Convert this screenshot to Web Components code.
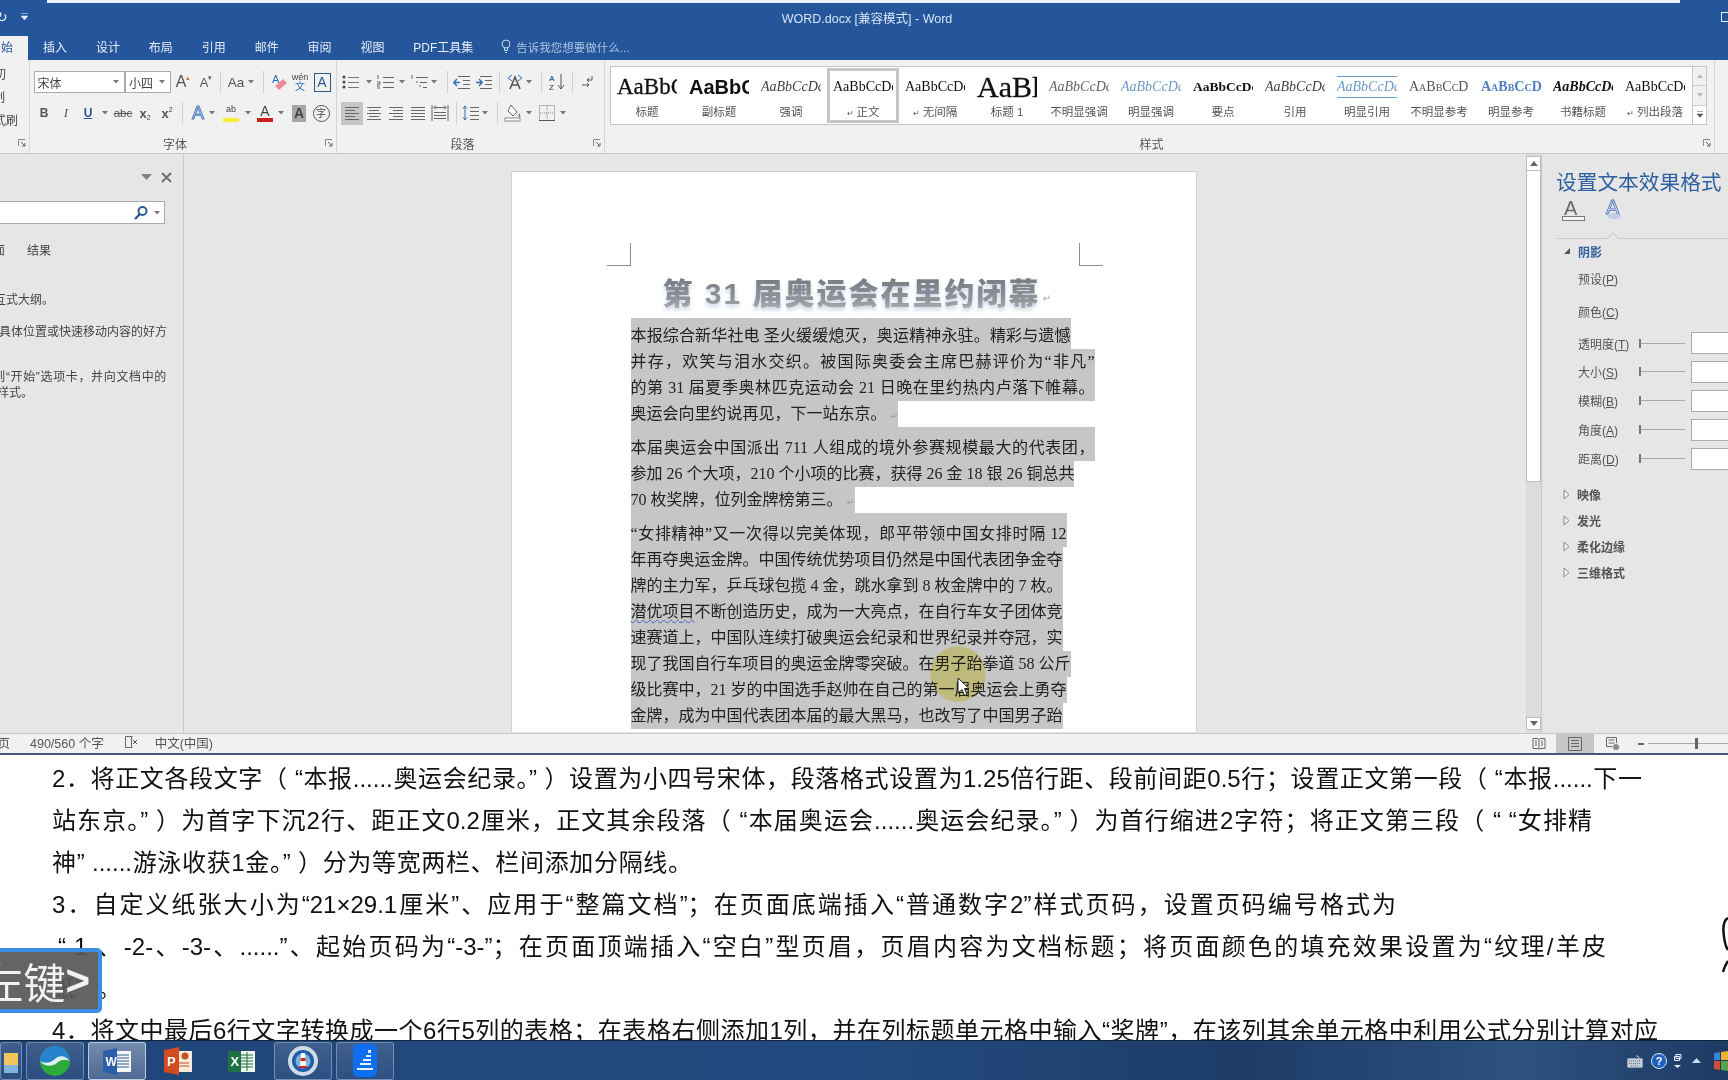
<!DOCTYPE html>
<html lang="zh-CN">
<head>
<meta charset="utf-8">
<title>WORD.docx</title>
<style>
  html, body { margin: 0; height: 1080px; overflow: hidden; background: #fff; }
  body { font-family: "Liberation Sans", "Noto Sans CJK SC", sans-serif; position: relative; display: flex; flex-direction: column; }
</style>
</head>
<body>
<word-titlebar></word-titlebar>
<word-tabs></word-tabs>
<word-ribbon></word-ribbon>
<word-workspace></word-workspace>
<word-status></word-status>
<task-text></task-text>
<task-bar></task-bar>
<key-badge>左键<b>&gt;</b></key-badge>

<script>
const caret = '<svg width="6" height="4"><path d="M0 0h6L3 3.500z" fill="#777"/></svg>';

// cells placed by their centre x, the gaps come from the previous cell
function cells(items, origin) {
    let end = origin;
    return items.map(([x, html, w = 18]) => {
        const left = x - w / 2 - end;
        end = x + w / 2;
        return `<span class="c" style="width:${w}px;margin-left:${left}px">${html}</span>`;
    }).join('');
}
const tx = (t, s) => `<span style="${s}">${t}</span>`;
const lines = (rows, c = '#666') => `<svg width="18" height="16" fill="none" stroke="${c}">${rows.map(([a, b, y]) => `<path d="M${a} ${y}.5H${b}"/>`).join('')}</svg>`;

const icons = {
    bullets: '<svg width="18" height="16"><g fill="#444"><circle cx="2" cy="3" r="1.500"/><circle cx="2" cy="8" r="1.500"/><circle cx="2" cy="13" r="1.500"/></g><path d="M6 3.500h11M6 8.500h11M6 13.500h11" stroke="#777"/></svg>',
    numbers: '<svg width="18" height="16"><path d="M1 1v4M0 8h3v2H0v2h3M0 14h3M6 3.500h11M6 8.500h11M6 13.500h11" stroke="#666" fill="none"/></svg>',
    multi: '<svg width="18" height="16"><path d="M1 1v4M5 3.500h12M5 8h2M9 8.500h7M8 12h2M12 13.500h4M12 10v0" stroke="#666" fill="none"/></svg>',
    outdent: '<svg width="18" height="16"><path d="M5 2.500h12M10 6.500h7M10 10.500h7M5 14.500h12" stroke="#666"/><path d="M7 8.500H1M4 5L.8 8.500 4 12" stroke="#2f6fb5" stroke-width="1.400" fill="none"/></svg>',
    indent: '<svg width="18" height="16"><path d="M5 2.500h12M10 6.500h7M10 10.500h7M5 14.500h12" stroke="#666"/><path d="M1 8.500h6M4 5l3.200 3.500L4 12" stroke="#2f6fb5" stroke-width="1.400" fill="none"/></svg>',
    dir: '<svg width="18" height="16"><path d="M2 4l4-3M2 4l4 3M16 4l-4-3M16 4l-4 3" stroke="#2f6fb5" fill="none"/><path d="M4 15L9 3l5 12M6 11h6" stroke="#555" stroke-width="1.600" fill="none"/></svg>',
    sort: '<svg width="18" height="18"><text x="1" y="8" font-size="8" font-weight="700" fill="#2f6fb5" font-family="Liberation Sans">A</text><text x="1" y="17" font-size="8" font-weight="700" fill="#666" font-family="Liberation Sans">Z</text><path d="M13 1v15M10 12l3 4 3-4" stroke="#555" fill="none"/></svg>',
    para: '<svg width="14" height="16"><path d="M11 2v4H6M8 4L6 6l2 2" stroke="#555" fill="none"/><path d="M1 11h7M6 9l2 2-2 2" stroke="#555" fill="none"/></svg>',
    left: lines([[2, 16, 2], [2, 12, 5], [2, 16, 8], [2, 12, 11], [2, 16, 14]]),
    center: lines([[2, 16, 2], [4, 14, 5], [2, 16, 8], [4, 14, 11], [2, 16, 14]]),
    right: lines([[2, 16, 2], [6, 16, 5], [2, 16, 8], [6, 16, 11], [2, 16, 14]]),
    justify: lines([[2, 16, 2], [2, 16, 5], [2, 16, 8], [2, 16, 11], [2, 16, 14]]),
    dist: '<svg width="18" height="18"><path d="M1 1v16M17 1v16M3 3.500h12M5 1.500L3 3.500l2 2M13 1.500l2 2-2 2M3 8.500h12M3 11.500h12M3 14.500h12" stroke="#666" fill="none"/></svg>',
    spacing: '<svg width="18" height="18"><path d="M3 2v14M1 4.500L3 2l2 2.500M1 13.500L3 16l2-2.500" stroke="#2f6fb5" fill="none"/><path d="M8 3.500h9M8 7.500h9M8 11.500h9M8 15.500h9" stroke="#666"/></svg>',
    shade: '<svg width="18" height="18"><path d="M7 1l6 7-4 4-5-5z" fill="#fff" stroke="#666"/><path d="M15 9c1 2 2 3 1 4s-2 0-1-4z" fill="#777"/><rect x="1" y="14" width="15" height="3" fill="#fff" stroke="#888"/></svg>',
    border: '<svg width="18" height="18"><rect x="1.500" y="1.500" width="15" height="15" fill="none" stroke="#777" stroke-dasharray="1 1"/><path d="M9 2v14M2 9h14" stroke="#888" stroke-dasharray="1 1"/><path d="M1 16.500h16" stroke="#555"/></svg>',
    eraser: '<svg width="18" height="18"><text x="2" y="10" font-size="11" fill="#2f6fb5" font-family="Liberation Sans">A</text><path d="M5 13l8-7 4 4-8 7z" fill="#e58f99"/></svg>',
    launcher: '<svg width="8" height="8"><path d="M.5 7V.5H7" fill="none" stroke="#888"/><path d="M3 3l4 4M7 4v3H4" fill="none" stroke="#666"/></svg>',
    search: '<svg width="16" height="16"><circle cx="9.500" cy="6" r="4" fill="none" stroke="#2a5f96" stroke-width="2"/><path d="M7 9l-5 5" stroke="#2a4f78" stroke-width="2.200"/></svg>'
};

class ShadowBox extends HTMLElement {
    constructor() {
        super();
        const shadow = this.attachShadow({ mode: 'open' });
        shadow.innerHTML = `<style>${this.css()}</style>${this.html()}`;
    }
    css() { return ''; }
    html() { return '<slot></slot>'; }
}

class WordTitlebar extends ShadowBox {
    css() {
        return `
            :host { display: block; height: 36px; background: #25569b; color: #d5e4f3; position: relative; font-size: 12.5px; flex: none; }
            .strip { height: 3px; margin: 0 48px 0 47px; background: #e9f3fb; }
            .bar { display: grid; grid-template-columns: 1fr auto 1fr; align-items: center; height: 28px; padding-left: 6px; }
            .qa { display: flex; gap: 13px; align-items: center; margin-left: -6px; }
            .undo { margin-left: -4px; font-size: 14px; color: #e6eef8; }
            .r { justify-self: end; display: flex; margin-right: -3px; }
        `;
    }
    html() {
        return `<div class="strip"></div>
            <div class="bar">
                <div class="qa"><span class="undo">↻</span><svg width="7" height="8"><path d="M0 .5h7M0 3h7L3.500 7z" fill="#e6eef8" stroke="#e6eef8" stroke-width=".5"/></svg></div>
                <div>WORD.docx [兼容模式] - Word</div>
                <div class="r"><svg width="10" height="12"><rect x=".5" y="1.500" width="12" height="9" fill="none" stroke="#e6eef8"/></svg></div>
            </div>`;
    }
}

class WordTabs extends ShadowBox {
    css() {
        return `
            :host { display: flex; height: 24px; background: #25569b; color: #e6eef8; font-size: 12px; align-items: center; overflow: hidden; flex: none; }
            .on { width: 28px; height: 24px; background: #f1f1f1; color: #25569b; display: flex; justify-content: flex-end; align-items: center; overflow: hidden; white-space: nowrap; padding: 0 15px 3px 0; box-sizing: border-box; }
            .list { display: flex; gap: 28.900px; margin: 0 0 3px 15px; }
            .ask { display: flex; align-items: center; gap: 5px; margin: 0 0 3px 28px; color: #a9c2e0; font-size: 11.5px; }
        `;
    }
    html() {
        const tabs = ['插入', '设计', '布局', '引用', '邮件', '审阅', '视图', 'PDF工具集'];
        return `<div class="on">开始</div>
            <div class="list">${tabs.map(t => `<span>${t}</span>`).join('')}</div>
            <div class="ask"><svg width="10" height="15" fill="none" stroke="#c6d8ec"><circle cx="5" cy="5" r="4"/><path d="M3.500 9v2.500h3V9M4 13.500h2"/></svg>告诉我您想要做什么...</div>`;
    }
}

class RibbonGroup extends ShadowBox {
    css() {
        return `
            :host { display: flex; flex-direction: column; box-sizing: border-box; height: 93px; position: relative; padding-top: 11px; border-right: 1px solid #d6d6d6; flex: none; }
            .body { flex: 1; min-height: 0; }
            .foot { height: 18px; margin-bottom: 1px; padding-right: 16px; display: flex; justify-content: center; align-items: center; font-size: 12px; color: #555; position: relative; }
            .launch { position: absolute; right: 3px; top: 5px; display: flex; }
        `;
    }
    html() {
        return `<div class="body"><slot></slot></div>
            <div class="foot">${this.getAttribute('label') || ''}<span class="launch">${icons.launcher}</span></div>`;
    }
}

class StyleItem extends ShadowBox {
    css() {
        return `
            :host { display: flex; flex-direction: column; width: 72px; box-sizing: border-box; height: 55px; margin-top: 1px; padding-top: 3px; overflow: hidden; flex: none; align-items: center; }
            :host([selected]) { border: 3px solid #c6c6c6; padding-top: 0; }
            .s { height: 32px; width: 60px; flex: none; overflow: hidden; white-space: nowrap; display: flex; align-items: center; justify-content: flex-start; font-family: "Liberation Serif", serif; color: #111; }
            :host([selected]) .s { width: 60px; }
            .l { font-size: 11.5px; color: #555; white-space: nowrap; line-height: 18px; }
            i { font-style: normal; font-size: 8px; margin-right: 3px; }
        `;
    }
    html() {
        const mark = this.hasAttribute('mark') ? '<i>↵</i>' : '';
        return `<div class="s"><span style="${this.getAttribute('look') || ''}"><slot></slot></span></div><div class="l">${mark}${this.getAttribute('label')}</div>`;
    }
}

class StyleGallery extends ShadowBox {
    css() {
        return `
            :host { display: flex; height: 59px; margin: -5px 0 0 5px; box-sizing: border-box; border: 1px solid #c6c6c6; background: #fff; width: 1097px; }
            .items { display: flex; width: 1081px; flex: none; overflow: hidden; }
            .sb { width: 14px; display: flex; flex-direction: column; border-left: 1px solid #c6c6c6; background: #f1f1f1; }
            .sb span { flex: 1; display: flex; align-items: center; justify-content: center; border-bottom: 1px solid #d0d0d0; }
            .sb span:last-child { background: #fff; border-bottom: 0; }
        `;
    }
    html() {
        const tri = (d, c) => `<svg width="8" height="6"><path d="${d}" fill="${c}"/></svg>`;
        return `<div class="items"><slot></slot></div>
            <div class="sb"><span>${tri('M4 1l3 4H1z', '#bbb')}</span><span>${tri('M1 1h6L4 5z', '#bbb')}</span>
            <span><svg width="8" height="7"><path d="M1 .5h6M1 3h6L4 6.500z" fill="#555" stroke="#555" stroke-width=".5"/></svg></span></div>`;
    }
}

class WordRibbon extends ShadowBox {
    css() {
        return `
            :host { display: flex; height: 94px; box-sizing: border-box; background: #f1f1f1; border-bottom: 1px solid #c8c8c8; color: #444; font-size: 12px; flex: none; overflow: hidden; }
            .cut div { display: flex; justify-content: flex-end; white-space: nowrap; font-size: 12px; color: #444; line-height: 23px; overflow: hidden; }
            .row { display: flex; align-items: center; height: 22px; }
            .row + .row { margin-top: 9px; }
            .c { display: inline-flex; justify-content: center; align-items: center; height: 22px; flex: none; box-sizing: border-box; }
            .sep { border-left: 1px solid #d0d0d0; height: 22px; }
            .box { background: #fff; border: 1px solid #ababab; justify-content: space-between; padding: 0 5px 0 3px; font-size: 12px; color: #444; }
            .on { background: #c6c6c6; height: 23px; }
            .rest { flex: 1; }
        `;
    }
    html() {
        const sep = x => [x, '<span class="sep"></span>', 1];
        const fontRow1 = cells([
            [79, `宋体${caret}`, 91], [148, `小四${caret}`, 46],
            [183, tx('A', 'font-size:16px;color:#555') + tx('▴', 'font-size:7px;color:#c07b2a;margin-bottom:9px')],
            [206, tx('A', 'font-size:13px;color:#555') + tx('▾', 'font-size:7px;color:#555;margin-bottom:9px')],
            sep(220), [236, tx('Aa', 'font-size:13.5px;color:#555'), 20], [251, caret, 8], sep(263),
            [279, icons.eraser], [300, '<span style="display:flex;flex-direction:column;align-items:center;line-height:9px;font-size:9px;color:#444">wén<span style="color:#2f6fb5;font-size:10px">文</span></span>', 18],
            [322, tx('A', 'font-size:14px;color:#2c5a8c;border:1px solid #2c5a8c;width:15px;text-align:center;line-height:17px')]
        ], 30);
        const fontRow2 = cells([
            [44, tx('B', 'font-weight:700;color:#555')], [66, tx('I', 'font-style:italic;font-family:Liberation Serif;color:#555;font-size:13px')],
            [88, tx('U', 'text-decoration:underline;color:#2c5a8c;font-weight:700')], [105, caret, 8],
            [123, tx('abc', 'text-decoration:line-through;font-size:11.5px;color:#555'), 20],
            [145, tx('x', 'font-weight:700;color:#555;font-size:13px') + tx('2', 'font-size:7px;margin-top:8px')],
            [167, tx('x', 'font-weight:700;color:#555;font-size:13px') + tx('2', 'font-size:7px;margin-bottom:8px')], sep(182),
            [198, tx('A', 'font-size:18px;color:#cfe0f4;-webkit-text-stroke:1px #4f81bd')], [212, caret, 8],
            [231, '<span style="display:flex;flex-direction:column;align-items:center;font-size:9px;line-height:10px;color:#444">ab<span style="width:16px;height:4px;background:#f5ee3a;margin-top:4px"></span></span>'], [248, caret, 8],
            [265, '<span style="display:flex;flex-direction:column;align-items:center;font-size:14px;line-height:13px;color:#444">A<span style="width:16px;height:4px;background:#c8201c"></span></span>'], [281, caret, 8],
            [299, tx('A', 'background:#a6a6a6;color:#444;width:14px;line-height:17px;text-align:center;font-weight:700;font-size:14px')],
            [321, tx('字', 'border:1px solid #555;border-radius:50%;width:15px;line-height:15px;text-align:center;font-size:10px')]
        ], 30);
        const paraRow1 = cells([
            [352, icons.bullets], [370, caret, 8], [387, icons.numbers], [403, caret, 8], [421, icons.multi], [435, caret, 8], sep(448),
            [463, icons.outdent], [485, icons.indent], sep(500), [516, icons.dir], [530, caret, 8], sep(542), [558, icons.sort], sep(573), [589, icons.para]
        ], 338);
        const paraRow2 = [
            [353, `<span class="c on" style="width:22px">${icons.left}</span>`, 22], [375, icons.center], [397, icons.right], [419, icons.justify], [441, icons.dist], sep(457),
            [472, icons.spacing], [486, caret, 8], sep(498), [514, icons.shade], [530, caret, 8], [548, icons.border], [564, caret, 8]
        ];
        // font and size boxes need the white field, so they are tagged afterwards
        const row1 = fontRow1.replace('class="c"', 'class="c box"').replace('class="c"', 'class="c box"');
        return `
            <ribbon-group class="cut" style="width:30px">
                <div style="margin-top:-7px;width:6px">剪切</div><div style="width:5px">复制</div><div style="width:18px">格式刷</div>
            </ribbon-group>
            <ribbon-group label="字体" style="width:307px">
                <div class="row">${row1}</div><div class="row">${fontRow2}</div>
            </ribbon-group>
            <ribbon-group label="段落" style="width:268px">
                <div class="row">${paraRow1}</div><div class="row">${cells(paraRow2, 338)}</div>
            </ribbon-group>
            <ribbon-group label="样式" style="width:1110px">
                <style-gallery>
                    <style-item label="标题" look="font-size:23px;-webkit-text-stroke:.3px #111">AaBbC(</style-item>
                    <style-item label="副标题" look="font-size:20px;font-weight:700;font-family:Liberation Sans">AaBbC(</style-item>
                    <style-item label="强调" look="font-size:14px;font-style:italic;color:#444">AaBbCcDc</style-item>
                    <style-item label="正文" mark selected look="font-size:14px">AaBbCcDc</style-item>
                    <style-item label="无间隔" mark look="font-size:14px">AaBbCcDc</style-item>
                    <style-item label="标题 1" look="font-size:30px;-webkit-text-stroke:.3px #111">AaBl</style-item>
                    <style-item label="不明显强调" look="font-size:14px;font-style:italic;color:#666">AaBbCcDc</style-item>
                    <style-item label="明显强调" look="font-size:14px;font-style:italic;color:#6b9bc8">AaBbCcDc</style-item>
                    <style-item label="要点" look="font-size:13.5px;font-weight:700">AaBbCcDd</style-item>
                    <style-item label="引用" look="font-size:14px;font-style:italic;color:#444">AaBbCcDc</style-item>
                    <style-item label="明显引用" look="font-size:14px;font-style:italic;color:#6b9bc8;border-top:1px solid #6b9bc8;border-bottom:1px solid #6b9bc8;padding:2px 0;display:inline-block">AaBbCcDc</style-item>
                    <style-item label="不明显参考" look="font-size:14px;font-variant:small-caps;color:#555">AaBbCcDd</style-item>
                    <style-item label="明显参考" look="font-size:14px;font-variant:small-caps;font-weight:700;color:#4f81bd">AaBbCcDd</style-item>
                    <style-item label="书籍标题" look="font-size:14px;font-weight:700;font-style:italic">AaBbCcDc</style-item>
                    <style-item label="列出段落" mark look="font-size:14px">AaBbCcDc</style-item>
                </style-gallery>
            </ribbon-group>
            <div class="rest"></div>`;
    }
}

class NavPane extends ShadowBox {
    css() {
        return `
            :host { display: flex; flex-direction: column; width: 184px; box-sizing: border-box; flex: none; background: #e6e6e6; border-right: 1px solid #c8c8c8; font-size: 12px; color: #444; overflow: hidden; }
            .top { display: flex; justify-content: flex-end; align-items: center; gap: 9px; height: 47px; padding-right: 11px; }
            .search { display: flex; justify-content: flex-end; align-items: center; gap: 5px; height: 23px; width: 165px; box-sizing: border-box; background: #fff; border: 1px solid #ababab; border-left: 0; padding-right: 4px; flex: none; }
            .clip { display: flex; justify-content: flex-end; white-space: nowrap; overflow: hidden; line-height: 17px; flex: none; }
            .tabs { display: flex; margin-top: 19px; height: 17px; line-height: 17px; flex: none; }
            .tabs .clip { width: 5px; margin-right: 22px; }
            .msg { margin-top: 32px; }
        `;
    }
    html() {
        return `<div class="top"><svg width="11" height="7"><path d="M0 0h11L5.500 6z" fill="#808080"/></svg>
                <svg width="11" height="11"><path d="M1 1l9 9M10 1l-9 9" stroke="#707070" stroke-width="2"/></svg></div>
            <div class="search">${icons.search}${caret}</div>
            <div class="tabs"><span class="clip">页面</span><span>结果</span></div>
            <div class="msg clip" style="width:54px">交互式大纲。</div>
            <div class="clip" style="width:167px;margin-top:15px">档中的具体位置或快速移动内容的好方</div>
            <div class="clip" style="width:167px;margin-top:28px;letter-spacing:.65px">到“开始”选项卡，并向文档中的</div>
            <div class="clip" style="width:33px;margin-top:-1px">标题样式。</div>`;
    }
}

const DOC = [
    [['本报综合新华社电 圣火缓缓熄灭，奥运精神永驻。精彩与遗憾', 440], ['并存，欢笑与泪水交织。被国际奥委会主席巴赫评价为“非凡”', 464], ['的第 31 届夏季奥林匹克运动会 21 日晚在里约热内卢落下帷幕。', 464], ['奥运会向里约说再见，下一站东京。', 267, 1]],
    [['本届奥运会中国派出 711 人组成的境外参赛规模最大的代表团，', 464], ['参加 26 个大项，210 个小项的比赛，获得 26 金 18 银 26 铜总共', 443], ['70 枚奖牌，位列金牌榜第三。', 224, 1]],
    [['“女排精神”又一次得以完美体现，郎平带领中国女排时隔 12', 436], ['年再夺奥运金牌。中国传统优势项目仍然是中国代表团争金夺', 432], ['牌的主力军，乒乓球包揽 4 金，跳水拿到 8 枚金牌中的 7 枚。', 432], ['<u>潜优项目</u>不断创造历史，成为一大亮点，在自行车女子团体竞', 432], ['速赛道上，中国队连续打破奥运会纪录和世界纪录并夺冠，实', 432], ['现了我国自行车项目的奥运金牌零突破。在男子跆拳道 58 公斤', 440], ['级比赛中，21 岁的中国选手赵帅在自己的第一届奥运会上勇夺', 436], ['金牌，成为中国代表团本届的最大黑马，也改写了中国男子跆', 432]]
];

class DocPage extends ShadowBox {
    css() {
        return `
            :host { display: block; width: 686px; height: 561px; flex: none; box-sizing: border-box; position: relative; background: #fff; border: 1px solid #d0d0d0; border-bottom: 0; padding: 71px 0 0 119px; overflow: hidden; font-family: "Liberation Serif", "Noto Sans CJK SC", serif; color: #222; }
            .crops { display: flex; justify-content: space-between; width: 496px; margin-left: -24px; height: 24px; }
            .crops span { width: 24px; height: 23px; box-sizing: border-box; border-bottom: 1px solid #8c8c8c; }
            .crops span:first-child { border-right: 1px solid #8c8c8c; }
            .crops span:last-child { border-left: 1px solid #8c8c8c; }
            h1 { margin: 4px 0 1px 32px; height: 46px; font: 700 30px/46px "Liberation Sans", "Noto Sans CJK SC", sans-serif; white-space: pre; display: flex; align-items: center; }
            h1 b { background: linear-gradient(#6f737a, #93979d 65%, #c6c9cd); -webkit-background-clip: text; background-clip: text; color: transparent; filter: drop-shadow(0 3px 2px rgba(135, 165, 200, .45)); letter-spacing: 2px; }
            h1 i { font: 10px "DejaVu Sans"; color: #aaa; margin: 8px 0 0 2px; }
            .ln { display: block; height: 26px; line-height: 26px; font-size: 16px; background: #c6c6c6; text-align: justify; text-align-last: justify; white-space: nowrap; }
            .p { padding-top: 8px; height: 34px; line-height: 26px; box-sizing: border-box; }
            .first { padding-top: 5px; height: 31px; }
            .left { text-align-last: left; }
            .left i { font: 9px "DejaVu Sans"; color: #999; margin-left: 4px; }
            u { text-decoration: underline wavy #4a5fc0 1px; text-underline-offset: 2px; }
            .halo { position: absolute; left: 418px; top: 474px; width: 56px; height: 56px; border-radius: 50%; background: radial-gradient(circle, rgba(240, 232, 110, .65) 65%, rgba(240, 232, 110, 0) 100%); mix-blend-mode: multiply; }
            .arrow { position: absolute; left: 445px; top: 505px; }
        `;
    }
    html() {
        const body = DOC.map((para, i) => para.map(([t, w, last], j) => {
            const cls = ['ln', j === 0 ? 'p' : '', i === 0 && j === 0 ? 'first' : '', last ? 'left' : ''].join(' ');
            return `<span class="${cls}" style="width:${w}px">${t}${last ? '<i>↵</i>' : ''}</span>`;
        }).join('')).join('');
        return `<div class="crops"><span></span><span></span></div>
            <h1><b>第 31 届奥运会在里约闭幕</b><i>↵</i></h1>
            ${body}
            <div class="halo"></div>
            <svg class="arrow" width="14" height="20"><path d="M1 1v15l4-3.500 2.500 6 2.500-1-2.500-6H12z" fill="#fff" stroke="#222"/></svg>`;
    }
}

class EffectRow extends ShadowBox {
    css() {
        return `
            :host { display: flex; align-items: center; padding-left: 36px; font-size: 12px; color: #555; white-space: nowrap; height: 29px; }
            .lb { width: 61px; flex: none; }
            u { text-underline-offset: 1px; }
            .tick { width: 2px; height: 9px; background: #777; flex: none; }
            .track { width: 44px; height: 1px; background: #aaa; margin-right: 6px; flex: none; }
            .inp { width: 60px; height: 22px; box-sizing: border-box; background: #fff; border: 1px solid #ababab; flex: none; }
        `;
    }
    html() {
        const slider = this.hasAttribute('slider') ? '<span class="tick"></span><span class="track"></span><span class="inp"></span>' : '';
        return `<span class="lb">${this.getAttribute('label')}(<u>${this.getAttribute('key')}</u>)</span>${slider}`;
    }
}

class FormatPane extends ShadowBox {
    css() {
        return `
            :host { display: block; width: 187px; flex: none; box-sizing: border-box; background: #e6e6e6; border-left: 1px solid #c8c8c8; overflow: hidden; position: relative; }
            h2 { margin: 17px 0 0 14px; font-weight: 400; font-size: 20.7px; line-height: 24px; color: #2f5f9e; white-space: nowrap; }
            .modes { display: flex; gap: 18px; height: 27px; align-items: center; margin-left: 20px; }
            .rule { height: 16px; margin-left: 15px; position: relative; border-bottom: 1px solid #c8c8c8; }
            .rule::after { content: ""; position: absolute; left: 52px; bottom: -4px; width: 7px; height: 7px; background: #e6e6e6; border: solid #c8c8c8; border-width: 1px 0 0 1px; transform: rotate(45deg); }
            .head { display: flex; align-items: center; height: 26px; font-size: 12px; font-weight: 700; color: #555; white-space: nowrap; padding-left: 21px; gap: 7px; }
            .open { color: #2f5f9e; height: 24px; }
            .open svg { flex: none; }
            .more { margin-top: 9px; }
        `;
    }
    html() {
        const shut = '<svg width="7" height="11"><path d="M1 1l5 4.500L1 10z" fill="#f4f4f4" stroke="#888"/></svg>';
        return `<h2>设置文本效果格式</h2>
            <div class="modes">
                <svg width="24" height="26"><text x="2" y="19" font-size="20" fill="#6a6a6a" font-family="Liberation Sans">A</text><rect x=".5" y="20.500" width="22" height="4" fill="#f4f4f4" stroke="#777"/></svg>
                <svg width="20" height="26"><text x="2" y="18" font-size="20" fill="#d6e2f2" stroke="#4f76b0" stroke-width=".8" font-family="Liberation Sans">A</text><ellipse cx="10" cy="20" rx="7" ry="3" fill="#b4c7e2" opacity=".8"/></svg>
            </div>
            <div class="rule"></div>
            <div class="head open"><svg width="8" height="8"><path d="M7 1v6H1z" fill="#555"/></svg>阴影</div>
            <effect-row label="预设" key="P" style="height:30px"></effect-row>
            <effect-row label="颜色" key="C" style="height:36px"></effect-row>
            <effect-row label="透明度" key="T" slider style="height:28px"></effect-row>
            <effect-row label="大小" key="S" slider></effect-row>
            <effect-row label="模糊" key="B" slider></effect-row>
            <effect-row label="角度" key="A" slider></effect-row>
            <effect-row label="距离" key="D" slider></effect-row>
            <div class="head more" style="margin-top:8px">${shut}映像</div>
            <div class="head">${shut}发光</div>
            <div class="head">${shut}柔化边缘</div>
            <div class="head">${shut}三维格式</div>`;
    }
}

class WordWorkspace extends ShadowBox {
    css() {
        return `
            :host { display: flex; height: 579px; flex: none; background: #e6e6e6; overflow: hidden; }
            .doc { flex: 1; display: flex; justify-content: center; padding: 17px 3px 0 0; box-sizing: border-box; background: #e6e6e6; overflow: hidden; }
            .scroll { width: 15px; flex: none; display: flex; flex-direction: column; background: #dcdcdc; padding-top: 2px; box-sizing: border-box; }
            .btn { height: 15px; background: #fff; border: 1px solid #bdbdbd; box-sizing: border-box; display: flex; align-items: center; justify-content: center; flex: none; }
            .thumb { height: 311px; background: #fff; border: 1px solid #bdbdbd; border-top: 0; box-sizing: border-box; flex: none; }
            .gap { flex: 1; }
            .down { margin-bottom: 3px; height: 13px; }
        `;
    }
    html() {
        return `<nav-pane></nav-pane>
            <div class="doc"><doc-page></doc-page></div>
            <div class="scroll">
                <div class="btn"><svg width="8" height="5"><path d="M4 0l4 5H0z" fill="#666"/></svg></div>
                <div class="thumb"></div><div class="gap"></div>
                <div class="btn down"><svg width="8" height="5"><path d="M0 0h8L4 5z" fill="#666"/></svg></div>
            </div>
            <format-pane></format-pane>`;
    }
}

class WordStatus extends ShadowBox {
    css() {
        return `
            :host { display: flex; height: 22px; flex: none; box-sizing: border-box; background: #f1f1f1; border-top: 1px solid #c8c8c8; border-bottom: 2px solid #44597a; padding-bottom: 3px; font-size: 12.5px; color: #555; align-items: center; white-space: nowrap; overflow: hidden; }
            .pg { width: 10px; overflow: hidden; display: flex; justify-content: flex-end; flex: none; }
            .views { display: flex; align-items: center; margin: 3px 0 0 auto; height: 19px; flex: none; }
            .view { display: flex; align-items: center; justify-content: center; height: 19px; }
            .on { background: #c6c6c6; }
        `;
    }
    html() {
        return `<span class="pg">第1页</span>
            <span style="margin-left:20px">490/560 个字</span>
            <svg style="margin-left:20px" width="14" height="14" fill="none" stroke="#666"><path d="M1.500 1.500h6v11h-6zM7.500 1.500h1M7.500 12.500h1"/><path d="M9 5l4 4M13 5l-4 4" stroke="#555"/></svg>
            <span style="margin-left:17px">中文(中国)</span>
            <div class="views">
                <span class="view" style="width:34px"><svg width="14" height="14" fill="none" stroke="#666"><path d="M1 1.500h5l1 1 1-1h5v10H8l-1 1-1-1H1zM7 2v10M3 4h2M3 6h2M3 8h2M9 4h2M9 6h2M9 8h2"/></svg></span>
                <span class="view on" style="width:38px"><svg width="14" height="14" fill="none" stroke="#666"><path d="M.5.5h13v13H.5zM3 3.500h8M3 6.500h8M3 9.500h8"/></svg></span>
                <span class="view" style="width:37px"><svg width="15" height="14" fill="none" stroke="#666"><path d="M1.500.5h10v9h-10zM3.500 3h6M3.500 6h6"/><circle cx="11" cy="10" r="3.500" fill="#888" stroke="#eee"/></svg></span>
                <span style="width:6px;height:2px;background:#666;margin:0 4px 0 7px"></span>
                <span style="width:47px;height:1px;background:#aaa"></span>
                <span style="width:3px;height:11px;background:#666"></span>
                <span style="width:30px;height:1px;background:#aaa"></span>
            </div>`;
    }
}

class TaskText extends ShadowBox {
    css() {
        return `
            :host { display: block; height: 285px; flex: none; box-sizing: border-box; padding: 3px 0 0 52px; background: #fff; color: #111; font-size: 24px; overflow: hidden; position: relative; }
            div { height: 42px; line-height: 42px; white-space: pre; text-align: justify; text-align-last: justify; }
            .last { text-align-last: left; }
            svg { position: absolute; right: 0; top: 162px; }
        `;
    }
    html() {
        return `<div style="width:1590px;white-space:nowrap">2．将正文各段文字（ “本报......奥运会纪录。” ）设置为小四号宋体，段落格式设置为1.25倍行距、段前间距0.5行；设置正文第一段（ “本报......下一</div>
            <div style="width:1540px;white-space:nowrap">站东京。” ）为首字下沉2行、距正文0.2厘米，正文其余段落（ “本届奥运会......奥运会纪录。” ）为首行缩进2字符；将正文第三段（ “ “女排精</div>
            <div style="width:640px;white-space:nowrap">神” ......游泳收获1金。” ）分为等宽两栏、栏间添加分隔线。</div>
            <div style="width:1344px;white-space:nowrap">3．自定义纸张大小为“21×29.1厘米”、应用于“整篇文档”；在页面底端插入“普通数字2”样式页码，设置页码编号格式为</div>
            <div style="width:1548px;margin-left:6px;white-space:nowrap">“-1-、-2-、-3-、......”、起始页码为“-3-”；在页面顶端插入“空白”型页眉，页眉内容为文档标题；将页面颜色的填充效果设置为“纹理/羊皮</div>
            <div class="last" style="width:80px">纸”  。</div>
            <div style="width:1606px;white-space:nowrap">4．将文中最后6行文字转换成一个6行5列的表格；在表格右侧添加1列，并在列标题单元格中输入“奖牌”，在该列其余单元格中利用公式分别计算对应</div>
            <svg width="6" height="56" fill="none" stroke="#111" stroke-width="2.500"><path d="M6 1C2 3 1 8 1.500 15 2 22 3 29 6 33M6 44c-2 3-4 7-5 11"/></svg>`;
    }
}

class TaskButton extends ShadowBox {
    css() {
        return `
            :host { display: flex; align-items: center; justify-content: center; width: 58px; height: 38px; box-sizing: border-box; border-radius: 3px; flex: none; overflow: hidden; }
            :host([framed]) { border: 1px solid rgba(190, 205, 225, .45); background: linear-gradient(rgba(255, 255, 255, .14), rgba(255, 255, 255, .05)); }
            :host([active]) { border: 1px solid rgba(215, 228, 240, .75); background: linear-gradient(rgba(255, 255, 255, .38), rgba(255, 255, 255, .2)); }
        `;
    }
}

class TaskBar extends ShadowBox {
    css() {
        return `
            :host { display: flex; height: 40px; flex: none; box-sizing: border-box; align-items: center; gap: 4px; border-top: 1px solid #10233f; background: linear-gradient(90deg, #20457a 0, #234a7e 50%, #1d3c68 72%, #2e5180 88%, #1d3a64 100%); overflow: hidden; }
            .tray { display: flex; align-items: center; margin-left: auto; }
            task-button svg { display: block; }
            text { font-family: "Liberation Sans", sans-serif; font-weight: 700; }
        `;
    }
    html() {
        return `
            <task-button framed style="width:22px;justify-content:flex-end"><svg width="14" height="28" style="margin-right:3px"><path d="M-10 6h24v20h-24z" fill="#f0c65c"/><path d="M-10 18h24v8h-24z" fill="#7fb2dc"/></svg></task-button>
            <task-button framed><svg width="32" height="32"><circle cx="16" cy="16" r="15" fill="#2dab3a"/><path d="M1 16A15 15 0 0 1 31 16C26 10 20 10 16 14 12 18 6 19 1 16z" fill="#2583cd"/><path d="M1 16c5 3 11 2 15-2 4-4 10-4 15 2-4-2-9-2-13 2-5 4-12 4-17-2z" fill="#dff1f6"/></svg></task-button>
            <task-button framed active><svg width="32" height="32"><rect x="14" y="6" width="16" height="21" fill="#f4f6f8"/><path d="M16 10h12M16 13h12M16 16h12M16 19h12M16 22h12" stroke="#33598f"/><path d="M2 6l14-3v27L2 27z" fill="#2b5ea8"/><text x="4.500" y="21" font-size="12" fill="#fff">W</text></svg></task-button>
            <task-button style="margin-left:-1px"><svg width="32" height="32"><rect x="15" y="6" width="15" height="21" fill="#f7ead8"/><path d="M17 18h10M17 21h10" stroke="#c4532a"/><circle cx="23" cy="11" r="3.500" fill="#c4532a"/><path d="M2 5l15-3v28L2 27z" fill="#d24c22"/><text x="5" y="21" font-size="13" fill="#fff">P</text></svg></task-button>
            <task-button style="margin-left:1px"><svg width="32" height="32"><rect x="14" y="6" width="16" height="21" fill="#f0f6ee"/><path d="M16 10h12M16 13h12M16 16h12M16 19h12M16 22h12M22 7v19" stroke="#207245"/><path d="M3 6h13v21H3z" fill="#1e7145"/><text x="5.500" y="21" font-size="13" fill="#fff">X</text></svg></task-button>
            <task-button framed><svg width="32" height="32"><circle cx="16" cy="16" r="15" fill="#cfdbe8"/><circle cx="16" cy="16" r="11" fill="#1d5ea8"/><circle cx="16" cy="16" r="7.500" fill="#7cb1dc"/><path d="M14 8h4l1 13h-6z" fill="#fff"/><path d="M13.500 13h5v3h-5zM12 21h8v2h-8z" fill="#c8261e"/></svg></task-button>
            <task-button framed><svg width="24" height="33"><rect width="24" height="33" rx="5" fill="#0d6ef0"/><path d="M15 6h3v3h-3zM13 11h5v2h-5zM10 15h8v2h-8zM7 19h11v2H7zM4 24h16v2H4z" fill="#e6f0ff"/></svg></task-button>
            <div class="tray">
                <svg width="16" height="14" style="margin-right:8px"><rect x=".5" y="4.500" width="15" height="9" rx="1" fill="#c4ced9" stroke="#8fa0b3"/><path d="M2 7h12M2 9.500h12M4 12h8" stroke="#66727f" stroke-dasharray="1 1"/><path d="M12 4c0-2-2-2-3-2" stroke="#c4ced9" fill="none"/></svg>
                <span style="width:14px;height:14px;border-radius:50%;background:#1f5fc0;border:1px solid #dbe8f6;color:#fff;font-size:11px;font-weight:700;text-align:center;line-height:14px;margin-right:6px">?</span>
                <svg width="10" height="20" style="margin-right:9px"><path d="M3 3.500h5v4H3zM1.500 5.500h5v4h-5z" fill="#25497b" stroke="#e6eef8"/><path d="M1 14h7l-3.500 3z" fill="#e6eef8"/></svg>
                <svg width="9" height="6" style="margin-right:13px"><path d="M4.500 0L9 5H0z" fill="#c8dbf0"/></svg>
                <svg width="14" height="20"><path d="M0 2l6-1v8H0z" fill="#3a84d8"/><path d="M7 1l7-1v9H7z" fill="#e9b434"/><path d="M0 10h6v9l-6-1z" fill="#d24a3a"/><path d="M7 10h7v10l-7-1z" fill="#5ba04a"/></svg>
            </div>`;
    }
}

class KeyBadge extends ShadowBox {
    css() {
        return `
            :host { position: absolute; left: -6px; top: 948px; width: 108px; height: 65px; box-sizing: border-box; border: 4px solid #3a8fe2; border-radius: 5px; background: rgba(88, 88, 88, .93); display: flex; justify-content: flex-end; align-items: center; overflow: hidden; color: #f2f2f2; font-size: 42px; white-space: nowrap; padding-right: 8px; }
        `;
    }
}

customElements.define('word-titlebar', WordTitlebar);
customElements.define('word-tabs', WordTabs);
customElements.define('ribbon-group', RibbonGroup);
customElements.define('style-item', StyleItem);
customElements.define('style-gallery', StyleGallery);
customElements.define('word-ribbon', WordRibbon);
customElements.define('nav-pane', NavPane);
customElements.define('doc-page', DocPage);
customElements.define('effect-row', EffectRow);
customElements.define('format-pane', FormatPane);
customElements.define('word-workspace', WordWorkspace);
customElements.define('word-status', WordStatus);
customElements.define('task-text', TaskText);
customElements.define('task-button', TaskButton);
customElements.define('task-bar', TaskBar);
customElements.define('key-badge', KeyBadge);
</script>
</body>
</html>
